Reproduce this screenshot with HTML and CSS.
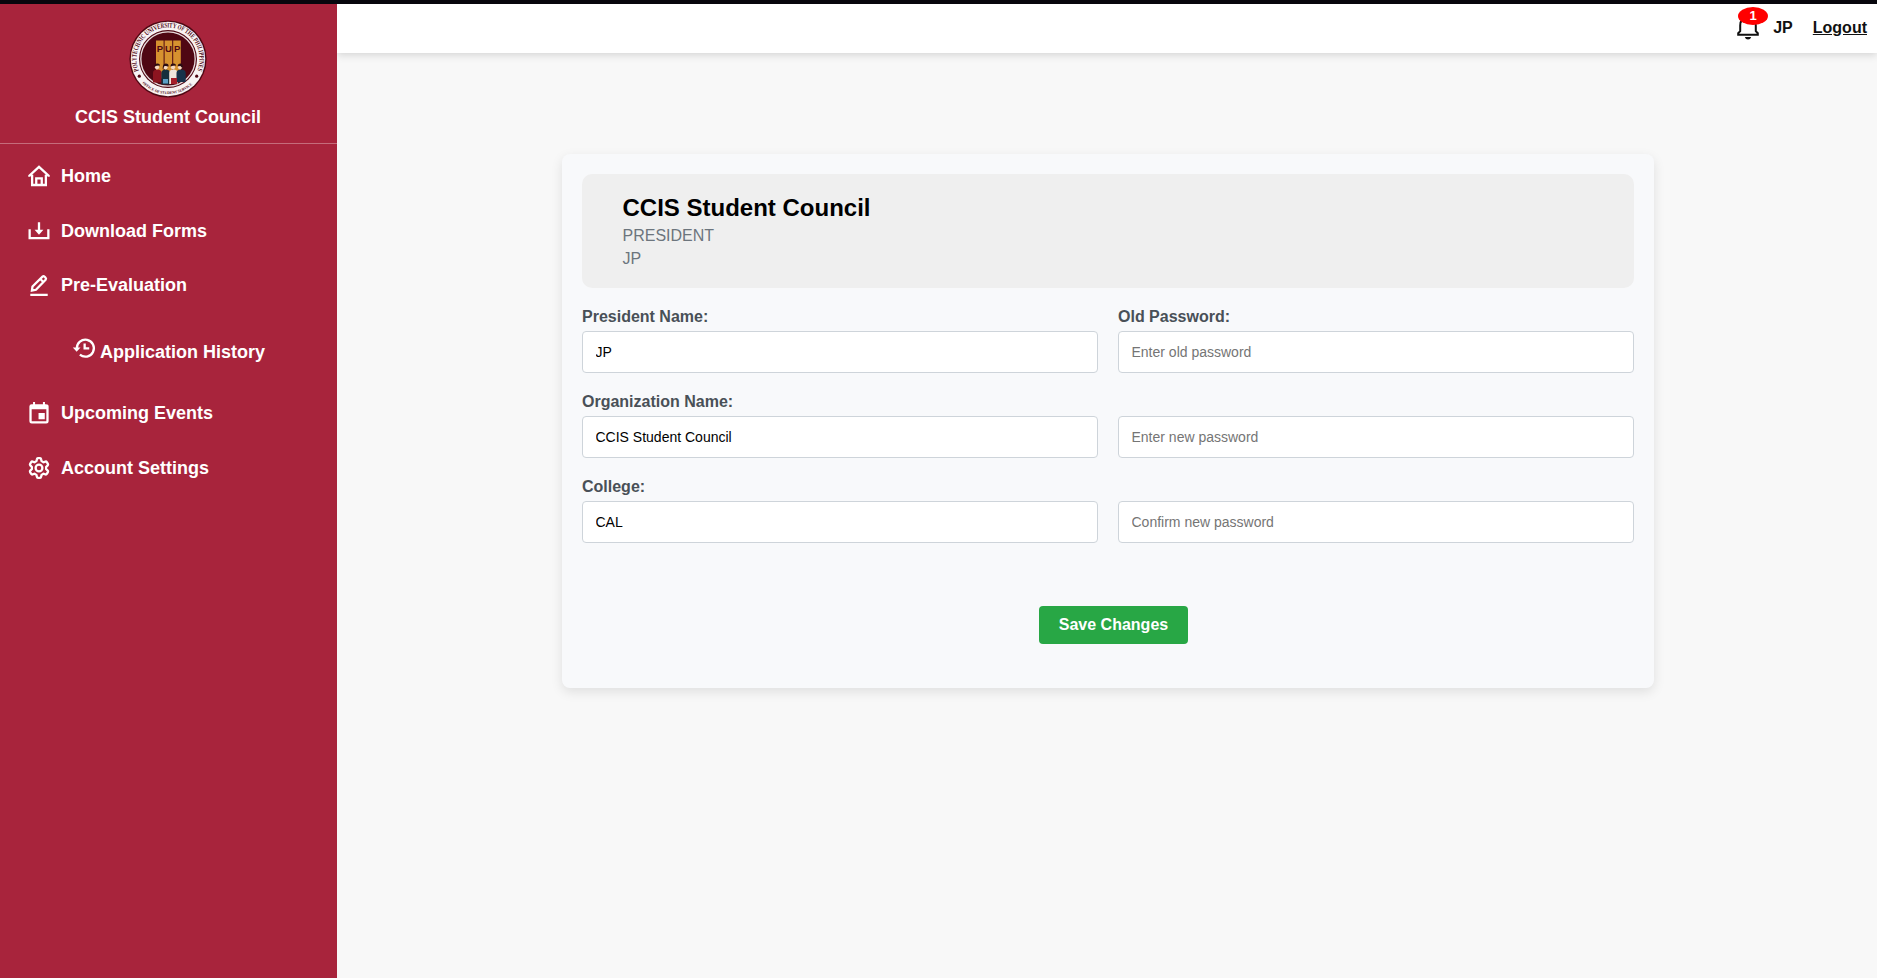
FILE: index.html
```html
<!DOCTYPE html>
<html lang="en">
<head>
<meta charset="utf-8">
<title>Account Settings</title>
<link rel="stylesheet" href="styles.css">
</head>
<body>
<div class="strip"></div>
<div class="app">
  <aside class="sidebar">
    <div class="brand">
      <svg class="seal" viewBox="0 0 78 78">
        <circle cx="39" cy="39" r="38.6" fill="#4f0713"/>
        <circle cx="39" cy="39" r="37.200" fill="#f8f3f3"/>
        <circle cx="39" cy="39" r="29" fill="#4f0713"/>
        <circle cx="39" cy="39" r="27.200" fill="none" stroke="#e8dcdd" stroke-width="1.300"/>
        <defs>
          <path id="arcTop" d="M10.100 51.500A31.500 31.500 0 1 1 67.900 51.500"/>
          <path id="arcBottom" d="M14.200 63.800A35 35 0 0 0 63.800 63.800"/>
        </defs>
        <text class="seal-ring"><textPath href="#arcTop" startOffset="1" textLength="122" lengthAdjust="spacingAndGlyphs">POLYTECHNIC UNIVERSITY OF THE PHILIPPINES</textPath></text>
        <text class="seal-office"><textPath href="#arcBottom" startOffset="50%" text-anchor="middle">OFFICE OF STUDENT SERVICES</textPath></text>
        <circle cx="10.300" cy="56.200" r="1.600" fill="#4f0713"/>
        <circle cx="67.700" cy="56.200" r="1.600" fill="#4f0713"/>
        <g fill="#d6922f">
          <rect x="27" y="20.500" width="7.600" height="38"/>
          <rect x="35.600" y="20.500" width="7.600" height="38"/>
          <rect x="44.200" y="20.500" width="7.600" height="38"/>
        </g>
        <g class="seal-pup"><text x="30.800" y="32">P</text><text x="39.400" y="32">U</text><text x="48.200" y="32">P</text></g>
        <path d="M24 62.500V53q0-3.500 4.300-3.500t4.300 3.500v9.500z" fill="#8d1420"/>
        <path d="M32.400 64.500V53q0-3.500 4.300-3.500t4.300 3.500v11.500z" fill="#17303d"/>
        <path d="M40.200 64V53q0-3.500 4.200-3.500t4.200 3.500v11z" fill="#f0e6dc"/>
        <path d="M47.500 62V53q0-3.500 4.600-3.500t4.600 3.500v9z" fill="#17324a"/>
        <path d="M42 58h6v6h-6z" fill="#a51f2a"/><path d="M34 59h5v4.500h-5z" fill="#5b9ec4"/>
        <g fill="#f4d9c2"><circle cx="28" cy="47.300" r="2.100"/><circle cx="36.500" cy="47.300" r="2.100"/><circle cx="44" cy="47.300" r="2.100"/><circle cx="51" cy="47.300" r="2.100"/></g>
        <path fill="#2a0c12" d="M25.500 46.500q0-3.200 3-3 2.800.3 2.400 2.300-2-.6-5.400.7zM33.700 49.500q-.3-6 3-6 3.300 0 2.800 3-2.500-1-4-.4zM41.500 46.500q0-3.200 3-3 2.800.3 2.400 2.300-2-.6-5.400.7zM48.700 46.200q0-2.900 3-2.800 3 1 1.700 4.800l-2-2.300z"/>
      </svg>
      <div class="brand-name">CCIS Student Council</div>
    </div>
    <nav class="nav">
      <a class="item"><svg class="icon" viewBox="0 0 24 24"><path d="M4.500 10.500V21.800h15V10.500M1.500 12.800V11.600L12 2l10.500 9.600v1.200M9 21v-6.500h6V21"/></svg>Home</a>
      <a class="item"><svg class="icon" viewBox="0 0 24 24"><path d="M1.800 10v9.800h20.400V10M12 2.500v9"/><path class="solid" d="M7.200 10.500h9.600L12 16z"/></svg>Download Forms</a>
      <a class="item"><svg class="icon" viewBox="0 0 24 24"><path d="M2.500 22.700h19M4.300 18l.6-4.400L15.800 2.800q1.200-.9 2.400.2l.8.800q1.200 1.200.2 2.500L8.700 17.200zM13.500 5.500l3.200 3.200"/></svg>Pre-Evaluation</a>
      <a class="item sub"><svg class="icon" viewBox="0 0 24 24"><path d="M4.200 12.500a9.300 9.300 0 1 1 3.300 6.800M12.700 7v5.500h5"/><path class="solid" d="M-.2 11.500h8.400L4 16.200z"/></svg>Application History</a>
      <a class="item"><svg class="icon" viewBox="0 0 24 24"><path class="solid" fill-rule="evenodd" d="M5.500 0h2.200v2.500h8.600V0h2.200v2.500h1Q22.500 2.500 22.500 5v16q0 2.500-2.500 2.500H4Q1.500 23.500 1.500 21V5q0-2.500 2.500-2.500h1.500zM4 8v13h16V8z"/><path class="solid" d="M11.500 12h6.800v6.800h-6.800z"/></svg>Upcoming Events</a>
      <a class="item"><svg class="icon" viewBox="0 0 24 24"><circle cx="12" cy="12" r="3.700"/><path d="M9.700 2.400q.2-1.200 1.200-1.200h2.200q1 0 1.200 1.200l.5 2.100 2 1.200 2.200-.7q1-.3 1.500.5l1.200 2q.5.900-.2 1.600l-1.700 1.700v2.400l1.700 1.700q.7.700.2 1.600l-1.200 2q-.5.800-1.500.5l-2.200-.7-2 1.200-.5 2.100q-.2 1.200-1.200 1.200h-2.200q-1 0-1.200-1.200l-.5-2.100-2-1.200-2.200.7q-1 .3-1.500-.5l-1.200-2q-.5-.9.200-1.600l1.700-1.700v-2.400L2.500 9.100q-.7-.7-.2-1.600l1.200-2q.5-.8 1.500-.5l2.200.7 2-1.200z"/></svg>Account Settings</a>
    </nav>
  </aside>
  <div class="page">
    <header class="topbar">
      <span class="bell"><svg viewBox="0 0 24 24"><path d="M2.200 18.800v-1.600l2-2V9.500Q4.200 2 12 2t7.800 7.500v5.700l2 2v1.600z" fill="none" stroke="#111" stroke-width="2"/><path d="M8.800 21h6.400q-.8 2.500-3.200 2.500T8.800 21z" fill="#111"/></svg><span class="badge">1</span></span>
      <span class="user">JP</span>
      <a class="logout">Logout</a>
    </header>
    <main class="card">
      <section class="profile">
        <h2>CCIS Student Council</h2>
        <p>PRESIDENT</p>
        <p>JP</p>
      </section>
      <form>
        <div class="fields">
          <label class="field"><span>President Name:</span><input type="text" value="JP"></label>
          <label class="field"><span>Old Password:</span><input type="password" placeholder="Enter old password"></label>
          <label class="field"><span>Organization Name:</span><input type="text" value="CCIS Student Council"></label>
          <label class="field"><input type="password" placeholder="Enter new password"></label>
          <label class="field"><span>College:</span><input type="text" value="CAL"></label>
          <label class="field"><input type="password" placeholder="Confirm new password"></label>
        </div>
        <button type="button" class="save">Save Changes</button>
      </form>
    </main>
  </div>
</div>
</body>
</html>
```
FILE: styles.css
```css
* { box-sizing: border-box; }
body { margin: 0; height: 978px; overflow: hidden; display: flex; flex-direction: column; background: #f8f8f8; font-family: "Liberation Sans", Arial, sans-serif; }
.strip { height: 4px; background: #07060d; flex: none; }
.app { display: flex; flex: 1; }
.sidebar { width: 337px; flex: none; background: #a8243c; color: #fff; }
.brand { height: 140px; padding: 16px 1px 0 0; border-bottom: 1px solid #c56c7b; display: flex; flex-direction: column; align-items: center; }
.seal { width: 78px; height: 78px; display: block; }
.seal-ring { font: bold 7px "Liberation Serif", serif; fill: #4f0713; }
.seal-office { font: bold 3.7px "Liberation Serif", serif; fill: #4f0713; }
.seal-pup { font: bold 9.5px "Liberation Sans", sans-serif; fill: #4f0713; text-anchor: middle; }
.brand-name { margin-top: 8px; font-size: 18px; line-height: 22px; font-weight: bold; }
.nav { padding-top: 4.5px; display: flex; flex-direction: column; }
.item { height: 54.7px; padding-left: 27.5px; display: flex; align-items: center; gap: 11.5px; font-size: 18px; font-weight: bold; line-height: 20px; }
.icon { width: 22px; height: 22px; flex: none; fill: none; stroke: #fff; stroke-width: 2.5; overflow: visible; }
.icon .solid { fill: #fff; stroke: none; }
.sub { height: 73px; padding: 6px 0 0 73px; gap: 5px; }
.sub .icon { margin-top: -9px; }
.page { flex: 1; display: flex; flex-direction: column; align-items: center; clip-path: inset(0); }
.topbar { align-self: stretch; height: 49px; flex: none; padding: 0 10px 2px 0; background: #fff; box-shadow: 0 2px 8px rgba(0,0,0,.15); display: flex; align-items: center; justify-content: flex-end; font-size: 16px; font-weight: bold; color: #111; }
.bell { position: relative; width: 24px; height: 24px; margin-right: 13px; }
.bell svg { width: 24px; height: 24px; display: block; }
.badge { position: absolute; left: 2px; top: -9px; width: 30px; height: 18px; border-radius: 50%; background: #f00; color: #fff; font-size: 13px; line-height: 18px; text-align: center; }
.user { margin-right: 20px; }
.logout { text-decoration: underline; }
.card { width: 1092px; height: 534px; margin: 101px 0 0 2px; padding: 20px; border-radius: 8px; background: #f8f9fb; box-shadow: 0 4px 12px rgba(0,0,0,.1); }
.profile { height: 114px; padding: 20px 40.5px; border-radius: 10px; background: #efefef; }
.profile h2 { margin: 0 0 2px; font-size: 24px; line-height: 28px; color: #000; }
.profile p { margin: 0; font-size: 16px; line-height: 23px; color: #6c757d; }
.fields { margin-top: 18px; display: grid; grid-template-columns: 1fr 1fr; column-gap: 20px; }
.field { height: 85px; padding-bottom: 18px; display: flex; flex-direction: column; justify-content: flex-end; }
.field span { font-size: 16px; line-height: 18px; font-weight: bold; color: #495057; margin-bottom: 5px; }
.field input { width: 100%; height: 42px; margin: 0; padding: 0 12.5px; border: 1px solid #ced4da; border-radius: 4px; background: #fff; font: 14px "Liberation Sans", Arial, sans-serif; color: #000; }
.field input::placeholder { color: #757575; }
.save { display: block; width: 149px; height: 38px; margin: 45px 0 0 457px; padding: 0; border: 0; border-radius: 4px; background: #28a745; color: #fff; font: bold 16px "Liberation Sans", Arial, sans-serif; }
```
